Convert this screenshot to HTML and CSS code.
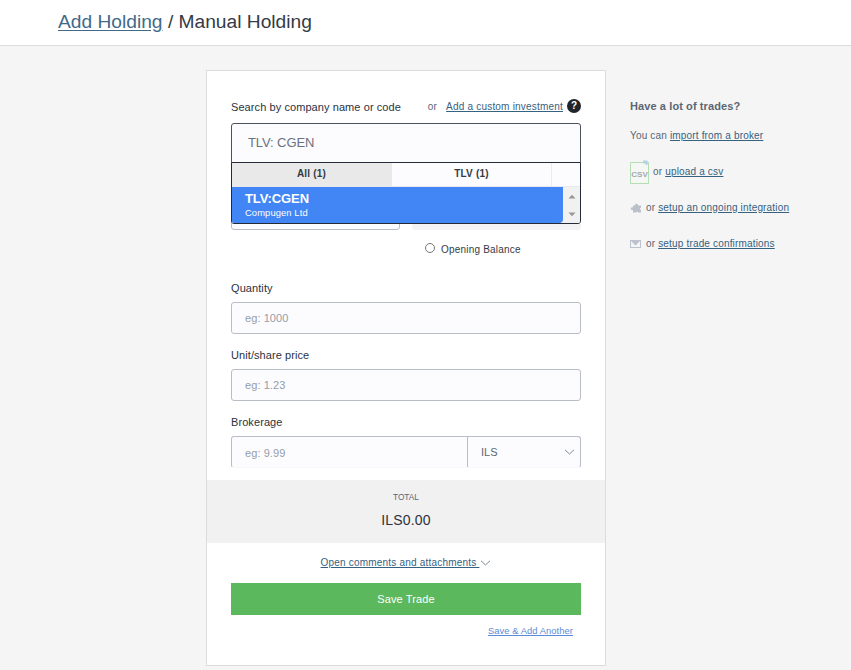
FILE: index.html
```html
<!DOCTYPE html>
<html lang="en">
<head>
  <meta charset="UTF-8" />
  <meta name="viewport" content="width=device-width, initial-scale=1.0"/>
  <title>Add Holding / Manual Holding</title>
  <link rel="stylesheet" href="styles.css">
</head>
<body>

  <header>
    <h1><a href="#">Add Holding</a> / Manual Holding</h1>
  </header>

  <div class="container">
    <form class="card">
      <!-- Company search -->
      <div class="search-head">
        <label class="label" for="search">Search by company name or code</label>
        <div class="custom">
          <span class="or">or</span>
          <a href="#">Add a custom investment</a>
          <span class="help">?</span>
        </div>
      </div>

      <div class="search">
        <input class="search-input" id="search" type="text" value="TLV: CGEN">
        <div class="dropdown">
          <div class="tabs">
            <div class="tab active">All (1)</div>
            <div class="tab">TLV (1)</div>
          </div>
          <div class="results">
            <div class="result">
              <strong>TLV:CGEN</strong>
              <span>Compugen Ltd</span>
            </div>
            <div class="scrollbar">
              <svg width="8" height="5" viewBox="0 0 8 5"><path d="M0.5 4.5L4 0.8L7.5 4.5Z"/></svg>
              <svg width="8" height="5" viewBox="0 0 8 5"><path d="M0.5 0.5L4 4.2L7.5 0.5Z"/></svg>
            </div>
          </div>
        </div>
      </div>

      <div class="trade-row">
        <div class="trade-box"></div>
        <div class="trade-box disabled"></div>
      </div>

      <label class="opening"><input type="radio" name="type"><span>Opening Balance</span></label>

      <!-- Trade details -->
      <div class="field">
        <label class="label" for="quantity">Quantity</label>
        <input class="input" id="quantity" type="text" placeholder="eg: 1000">
      </div>
      <div class="field">
        <label class="label" for="price">Unit/share price</label>
        <input class="input" id="price" type="text" placeholder="eg: 1.23">
      </div>
      <div class="field">
        <label class="label" for="brokerage">Brokerage</label>
        <div class="input-group">
          <input class="input" id="brokerage" type="text" placeholder="eg: 9.99">
          <div class="currency">
            <span>ILS</span>
            <svg width="11" height="6" viewBox="0 0 11 6"><path d="M1 0.8L5.5 5L10 0.8"/></svg>
          </div>
        </div>
      </div>

      <div class="total">
        <div class="total-label">TOTAL</div>
        <div class="total-value">ILS0.00</div>
      </div>

      <div class="comments">
        <a href="#">Open comments and attachments&nbsp;</a>
        <svg width="11" height="6" viewBox="0 0 11 6"><path d="M1 0.8L5.5 5L10 0.8"/></svg>
      </div>
      <button class="save" type="button">Save Trade</button>
      <a class="save-another" href="#">Save &amp; Add Another</a>
    </form>

    <aside>
      <h2>Have a lot of trades?</h2>
      <p>You can <a href="#">import from a broker</a></p>
      <p>
        <svg class="csv" width="19" height="24" viewBox="0 0 19 24">
          <path d="M0.5 2.5H18.5V23.5H0.5Z" fill="#f5f7f5" stroke="#b3dfb3"/>
          <path d="M13 0.5H17L18.5 3L16.5 5.5L15 3.5H13Z" fill="#b3d3e8"/>
          <text x="9.5" y="17" text-anchor="middle">CSV</text>
        </svg>
        <span>or <a href="#">upload a csv</a></span>
      </p>
      <p>
        <svg class="icon" width="12" height="10" viewBox="0 0 12 10">
          <path d="M3 2.5H5C4.6 0 8.4 0 8 2.5H11V4.8C9.6 4.4 9.6 7 11 6.6V9.5H8C8.2 8.4 5.8 8.4 6 9.5H3V7C0 7.4 0 3.8 3 4.2Z" fill="#bac1cb"/>
        </svg>
        <span>or <a href="#">setup an ongoing integration</a></span>
      </p>
      <p>
        <svg class="icon" width="12" height="8" viewBox="0 0 12 8">
          <rect x="0.5" y="0.5" width="10" height="7" fill="#f4f5f6" stroke="#bcc3cc"/>
          <path d="M1 1H10L5.5 5.5Z" fill="#bcc3cc"/>
        </svg>
        <span>or <a href="#">setup trade confirmations</a></span>
      </p>
    </aside>
  </div>

</body>
</html>
```

FILE: styles.css
```css
* { box-sizing: border-box; }
body { margin: 0; height: 670px; overflow: hidden; font-family: "Liberation Sans", Arial, sans-serif; font-size: 10px; letter-spacing: 0.2px; background-color: #f5f5f5; color: #5c6673; }
a { color: #36617f; text-decoration: underline; text-underline-offset: 1px; }
input, button { font-family: inherit; letter-spacing: inherit; }

header { height: 46px; padding-left: 58px; background-color: #fff; border-bottom: 1px solid #dcdcdc; }
header h1 { margin: 0; font-size: 19.2px; font-weight: normal; line-height: 43px; letter-spacing: 0; color: #343b45; }
header a { color: #416a89; text-underline-offset: 2px; }

.container { display: flex; align-items: flex-start; padding: 24px 0 0 206px; gap: 24px; }
.card { width: 400px; height: 596px; padding: 0 24px; background-color: #fff; border: 1px solid #dcdcdc; }
.label { display: block; font-size: 11px; line-height: 14px; letter-spacing: 0.08px; color: #2b3240; }

.search-head { display: flex; justify-content: space-between; align-items: center; height: 14px; margin-top: 29px; }
.custom { display: flex; align-items: center; margin-bottom: 2px; }
.or { margin-right: 9px; }
.help { width: 14px; height: 14px; margin-left: 4px; border-radius: 50%; background-color: #20242c; color: #fff; font-size: 10px; font-weight: bold; line-height: 14px; text-align: center; letter-spacing: 0; }

.search { position: relative; margin-top: 9px; }
.search-input { display: block; width: 350px; height: 40px; padding: 0 16px 2px; border: 1px solid #4c525c; border-radius: 3px 3px 0 0; background-color: #fcfcff; color: #6a727e; font-size: 13px; letter-spacing: -0.1px; outline: none; }
.dropdown { position: absolute; top: 39px; left: 0; width: 350px; height: 62px; border: 1px solid #262b38; border-radius: 0 0 3px 3px; background-color: #fcfcff; overflow: hidden; }
.tabs { display: flex; height: 24px; border-bottom: 1px solid #e6eaf0; }
.tab { width: 160px; border-right: 1px solid #e9ebef; color: #343b45; font-size: 10px; font-weight: bold; line-height: 22px; text-align: center; }
.tab.active { background-color: #e9e9e9; border-color: #e9e9e9; }
.results { display: flex; height: 36px; background-color: #f1f1f1; }
.result { display: flex; flex-direction: column; width: 331px; padding: 4px 13px 0; border-radius: 0 0 4px 0; background-color: #4285f4; color: #fff; }
.result strong { font-size: 13px; line-height: 15px; letter-spacing: -0.1px; }
.result span { font-size: 9.4px; line-height: 14px; letter-spacing: 0.1px; }
.scrollbar { display: flex; flex: 1; flex-direction: column; align-items: center; justify-content: space-between; padding: 7px 0 6px; }
.scrollbar svg { fill: #989898; }

.trade-row { display: flex; gap: 12px; margin-top: 35px; }
.trade-box { width: 169px; height: 32px; border: 1px solid #b9bdc7; border-radius: 3px; background-color: #fcfcff; }
.trade-box.disabled { border-color: #f3f3f5; background-color: #f3f3f5; }

.opening { display: flex; align-items: center; height: 14px; margin: 12px 0 0 194px; color: #343b45; }
.opening input { appearance: none; width: 10px; height: 10px; margin: -3px 6px 0 0; border: 1px solid #777; border-radius: 50%; }

.field { height: 67px; }
.opening + .field { margin-top: 25px; }
.input { display: block; width: 350px; height: 32px; margin-top: 7px; padding: 0 13px; border: 1px solid #b9bdc7; border-radius: 3px; background-color: #fcfcff; font-size: 11px; letter-spacing: 0.08px; outline: none; }
.input::placeholder { color: #949ca8; }
.input-group { display: flex; width: 350px; height: 32px; margin-top: 7px; border: 1px solid #b9bdc7; border-bottom-color: #f7f8fa; border-radius: 3px; background-color: #fcfcff; overflow: hidden; }
.input-group .input { width: 236px; height: 32px; margin: 0; border: 0; border-right: 1px solid #b9bdc7; border-radius: 0; background-color: transparent; }
.currency { display: flex; flex: 1; align-items: center; justify-content: space-between; padding: 0 5px 0 13px; font-size: 11px; letter-spacing: 0; }
.currency svg, .comments svg { fill: none; stroke: #7d8793; }

.total { height: 63px; margin: -2px -24px 0; padding-top: 11px; background-color: #f1f1f1; text-align: center; }
.total-label { font-size: 8.3px; line-height: 13px; letter-spacing: 0; }
.total-value { margin-top: 7px; color: #2b3240; font-size: 14px; line-height: 18px; }

.comments { display: flex; align-items: center; justify-content: center; gap: 1px; height: 14px; margin-top: 12px; }
.comments svg { margin-top: 2px; }
.save { display: block; width: 350px; height: 32px; margin-top: 14px; padding: 0; border: 0; background-color: #5cb85c; color: #fff; font-size: 11px; letter-spacing: 0.1px; cursor: pointer; }
.save-another { display: block; margin: 10px 8px 0 0; color: #5b8bd8; font-size: 9.4px; line-height: 12px; letter-spacing: 0.06px; text-align: right; }

aside { padding-top: 29px; }
aside h2 { margin: 0; font-size: 11px; line-height: 14px; letter-spacing: 0.1px; }
aside p { display: flex; align-items: center; height: 24px; margin: 0 0 12px; letter-spacing: 0.17px; white-space: pre; }
aside h2 + p { margin-top: 10px; }
.csv { margin: 1px 4px 0 0; }
.csv text { fill: #a3a6ac; font-size: 8px; font-weight: bold; letter-spacing: 0; }
.icon { margin: 2px 4px 0 0; }
```
